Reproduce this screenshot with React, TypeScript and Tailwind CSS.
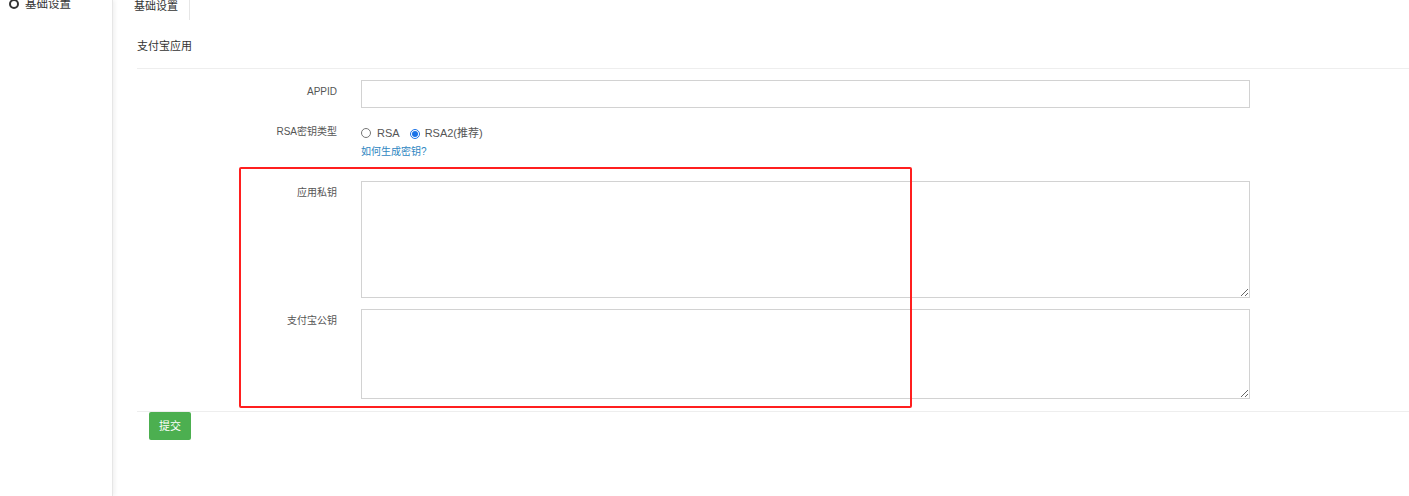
import React from "react";

const font = { fontFamily: '"Liberation Sans", "Noto Sans CJK SC", sans-serif' };

function Radio({ checked }: { checked?: boolean }) {
  return checked ? (
    <span className="inline-flex h-[10px] w-[10px] items-center justify-center rounded-full border border-[#1a73e8] bg-white">
      <span className="h-[6px] w-[6px] rounded-full bg-[#1a73e8]" />
    </span>
  ) : (
    <span className="inline-block h-[10px] w-[10px] rounded-full border border-[#767676] bg-white" />
  );
}

export default function App() {
  return (
    <div style={font} className="relative flex h-[496px] w-[1409px] overflow-hidden bg-white text-[#333]">
      <aside className="relative z-10 w-[113px] shrink-0 border-r border-[#e6e6e6] bg-white shadow-[2px_0_4px_rgba(0,0,0,0.06)]">
        <div className="-mt-[3px] flex items-center gap-[6px] pl-[9px]">
          <span className="h-[10px] w-[10px] rounded-full border-[2px] border-[#333]" />
          <span className="text-[11.5px] leading-[14px] text-[#333]">基础设置</span>
        </div>
      </aside>
      <main className="min-w-0 flex-1">
        <div className="ml-[4px] flex h-[20px] w-[73px] items-start border-r border-[#e6e6e6] pl-[17px]">
          <span className="-mt-[1px] text-[11px] leading-[14px] text-[#333]">基础设置</span>
        </div>
        <div className="pl-[24px]">
          <div className="mt-[18px] border-b border-[#eeeeee] pb-[14px] text-[11px] leading-[16px] text-[#333]">
            支付宝应用
          </div>
          <div className="mt-[11px] flex">
            <label className="w-[200px] pt-[5px] text-right text-[10px] leading-[14px] text-[#555]">APPID</label>
            <input className="ml-[24px] h-[28px] w-[889px] border border-[#d2d2d2] bg-white outline-none" />
          </div>
          <div className="mt-[12px] flex">
            <label className="w-[200px] pt-[5px] text-right text-[10px] leading-[14px] text-[#555]">RSA密钥类型</label>
            <div className="ml-[24px] pt-[5px]">
              <div className="flex h-[16px] items-center text-[11px] text-[#555]">
                <Radio />
                <span className="ml-[6px]">RSA</span>
                <span className="ml-[10px]"><Radio checked /></span>
                <span className="ml-[5px]">RSA2(推荐)</span>
              </div>
              <div className="mt-[4px] text-[10px] leading-[14px] text-[#2e86c1]">如何生成密钥?</div>
            </div>
          </div>
          <div className="mt-[22px] flex">
            <label className="w-[200px] pt-[5px] text-right text-[10px] leading-[14px] text-[#555]">应用私钥</label>
            <textarea className="ml-[24px] h-[117px] w-[889px] border border-[#d2d2d2] bg-white outline-none" />
          </div>
          <div className="mt-[11px] flex">
            <label className="w-[200px] pt-[5px] text-right text-[10px] leading-[14px] text-[#555]">支付宝公钥</label>
            <textarea className="ml-[24px] h-[90px] w-[889px] border border-[#d2d2d2] bg-white outline-none" />
          </div>
          <div className="mt-[12px] border-t border-[#eeeeee]">
            <button className="ml-[12px] h-[28px] w-[42px] rounded-[2px] bg-[#4caf50] text-[11px] text-white">提交</button>
          </div>
        </div>
      </main>
      <div className="pointer-events-none absolute left-[239px] top-[167px] h-[241px] w-[673px] rounded-[2px] border-[2px] border-[#ff1f1f]" />
    </div>
  );
}
